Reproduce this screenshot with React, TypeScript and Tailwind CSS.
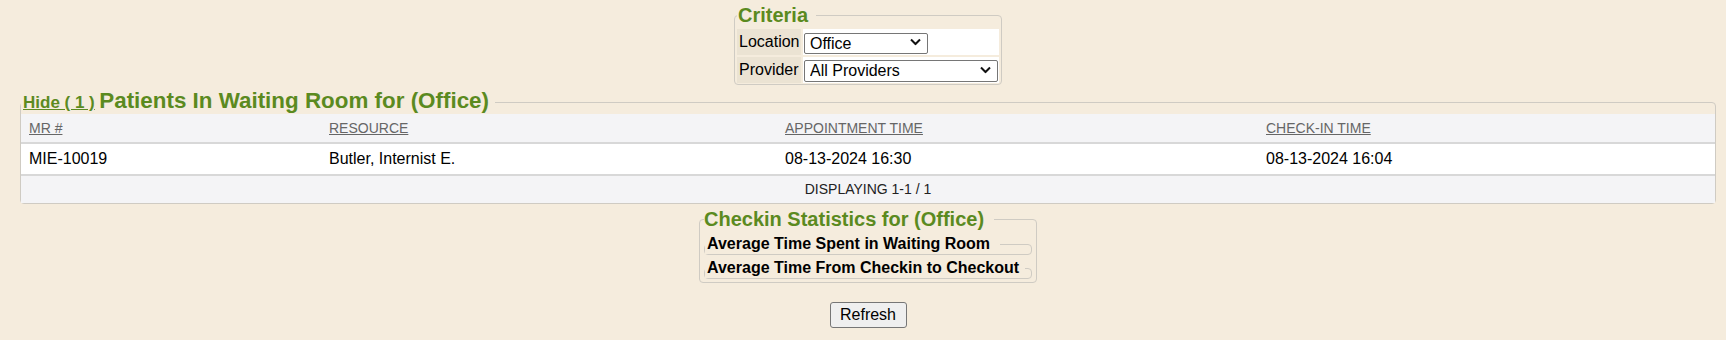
import React from "react";

const font = { fontFamily: '"Liberation Sans", Arial, sans-serif' };

const rows = [
  { mr: "MIE-10019", resource: "Butler, Internist E.", appt: "08-13-2024 16:30", checkin: "08-13-2024 16:04" },
];

const cols = "grid grid-cols-[300px_456px_481px_1fr]";

const Chevron = () => (
  <svg
    width="11"
    height="7"
    viewBox="0 0 11 7"
    className="pointer-events-none absolute right-[7px] top-1/2 -translate-y-1/2"
  >
    <path d="M1 1l4.5 4.5L10 1" fill="none" stroke="#111" strokeWidth="2" />
  </svg>
);

interface SelectProps {
  value: string;
  options: string[];
  className: string;
}
const Select = ({ value, options, className }: SelectProps) => (
  <div className={`relative ${className}`}>
    <select
      defaultValue={value}
      className="h-full w-full appearance-none rounded-[2px] border border-[#767676] bg-white pl-[5px] text-[16px] leading-[18px] text-black"
    >
      {options.map((o) => (
        <option key={o}>{o}</option>
      ))}
    </select>
    <Chevron />
  </div>
);

export default function App() {
  return (
    <div className="min-h-[340px] bg-[#f5ecdd] pl-[20px] pr-[10px] pt-[3px] text-black" style={font}>
      {/* criteria */}
      <fieldset className="mx-auto w-[268px] rounded-[4px] border border-[#cfcbc3] px-[2px] pb-[1px] pt-[2px]">
        <legend className="whitespace-nowrap pl-[1px] pr-[8px] text-[20px] font-bold leading-[24px] text-[#5b8a1f]">
          Criteria
        </legend>
        <div className="flex flex-col gap-[2px]">
          <div className="flex h-[26px] gap-[2px]">
            <div className="flex w-[64px] items-center bg-[#ebe3d3] pl-[2px] text-[16px]">Location</div>
            <div className="flex flex-1 items-center bg-white pl-[1px]">
              <Select value="Office" options={["Office"]} className="h-[21px] w-[124px]" />
            </div>
          </div>
          <div className="flex h-[26px] gap-[2px]">
            <div className="flex w-[64px] items-center bg-[#ebe3d3] pl-[2px] text-[16px]">Provider</div>
            <div className="flex flex-1 items-center bg-white pl-[1px]">
              <Select value="All Providers" options={["All Providers"]} className="h-[22px] w-[194px]" />
            </div>
          </div>
        </div>
      </fieldset>

      {/* waiting room */}
      <fieldset className="mt-[5px] rounded-[4px] border border-[#cfcbc3]">
        <legend className="h-[24px] whitespace-nowrap pl-[2px] pr-[6px] leading-[22px] text-[#5b8a1f]">
          <a href="#" className="text-[17px] font-bold underline">
            Hide ( 1 )
          </a>{" "}
          <span className="text-[22.4px] font-bold">Patients In Waiting Room for (Office)</span>
        </legend>
        <div className="text-left">
          <div className={`${cols} h-[30px] items-center border-b-2 border-[#d8d8d8] bg-[#f4f4f6] text-[14px] text-[#666]`}>
            <a href="#" className="justify-self-start pl-[8px] underline">MR #</a>
            <a href="#" className="justify-self-start pl-[8px] underline">RESOURCE</a>
            <a href="#" className="justify-self-start pl-[8px] underline">APPOINTMENT TIME</a>
            <a href="#" className="justify-self-start pl-[8px] underline">CHECK-IN TIME</a>
          </div>
          {rows.map((r) => (
            <div key={r.mr} className={`${cols} h-[32px] items-center border-b-2 border-[#d8d8d8] bg-white text-[16px]`}>
              <div className="pl-[8px]">{r.mr}</div>
              <div className="pl-[8px]">{r.resource}</div>
              <div className="pl-[8px]">{r.appt}</div>
              <div className="pl-[8px]">{r.checkin}</div>
            </div>
          ))}
          <div className="flex h-[27px] items-center justify-center bg-[#f4f4f6] text-[14px] text-[#222]">
            DISPLAYING 1-1 / 1
          </div>
        </div>
      </fieldset>

      {/* statistics */}
      <fieldset className="mx-auto mt-[3px] w-[338px] rounded-[4px] border border-[#cfcbc3] px-[4px] pb-[3px] pt-[3px]">
        <legend className="whitespace-nowrap pr-[10px] text-[20px] font-bold leading-[24px] text-[#5b8a1f]">
          Checkin Statistics for (Office)
        </legend>
        <fieldset className="w-full rounded-[4px] border border-[#cfcbc3]">
          <legend className="whitespace-nowrap pl-[2px] pr-[10px] text-[16px] font-bold leading-[20px]">
            Average Time Spent in Waiting Room
          </legend>
        </fieldset>
        <fieldset className="mt-[3px] w-full rounded-[4px] border border-[#cfcbc3]">
          <legend className="whitespace-nowrap pl-[2px] pr-[6px] text-[16px] font-bold leading-[20px]">
            Average Time From Checkin to Checkout
          </legend>
        </fieldset>
      </fieldset>

      <div className="mt-[19px] flex justify-center">
        <button className="h-[26px] w-[77px] rounded-[3px] border border-[#767676] bg-[#efefef] text-[16px]">
          Refresh
        </button>
      </div>
    </div>
  );
}
